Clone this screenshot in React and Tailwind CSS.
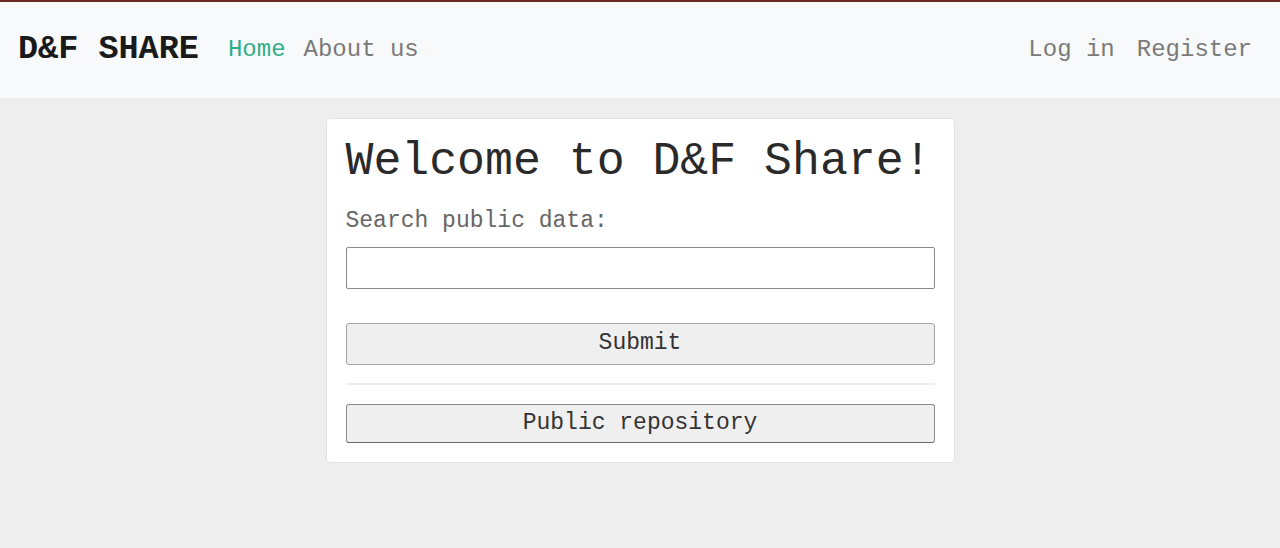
import React from 'react';

const mono = "font-['Liberation_Mono','Courier_New',monospace]";

const Navbar = () => (
  <nav className="border-t-2 border-[#6b2a22] bg-[#f8f9fa] h-[98px] flex items-center justify-between pl-[18px] pr-[28px]">
    <div className="flex items-center">
      <a className="text-[33.5px] font-bold text-[#1a1a1a] leading-none mr-[29px]">D&amp;F SHARE</a>
      <a className="text-[24px] text-[#2fae88] leading-none mr-[18px]">Home</a>
      <a className="text-[24px] text-[#7a7a7a] leading-none">About us</a>
    </div>
    <div className="flex items-center gap-[22px]">
      <a className="text-[24px] text-[#7a7a7a] leading-none">Log in</a>
      <a className="text-[24px] text-[#7a7a7a] leading-none">Register</a>
    </div>
  </nav>
);

const App = () => {
  return (
    <div className={`${mono} min-h-[548px] bg-[#eeeeee]`}>
      <Navbar />

      <main className="flex justify-center pt-[20px]">
        <div className="w-[629px] bg-white border border-[#e2e2e2] rounded-[4px] px-[19px] pt-[20px] pb-[19px]">
          <h1 className="text-[46.5px] leading-none text-[#2a2a2a] whitespace-nowrap">Welcome to D&amp;F Share!</h1>

          <label className="block mt-[24px] text-[23px] leading-none text-[#666]">Search public data:</label>
          <input
            type="text"
            className="block mt-[14px] w-full h-[42px] border border-[#8a8a8a] rounded-[2px] bg-white px-2 text-[20px] outline-none"
          />

          <button className="block mt-[34px] w-full h-[42px] bg-[#efefef] border border-[#a6a6a6] rounded-[3px] text-[23px] text-[#333]">
            Submit
          </button>

          <hr className="mt-[18px] border-0 h-[2px] bg-[#efefef]" />

          <button className="block mt-[19px] w-full h-[39px] bg-[#efefef] border border-[#8a8a8a] border-b-[#666] rounded-[3px] text-[23px] text-[#333]">
            Public repository
          </button>
        </div>
      </main>
    </div>
  );
};

export default App;
